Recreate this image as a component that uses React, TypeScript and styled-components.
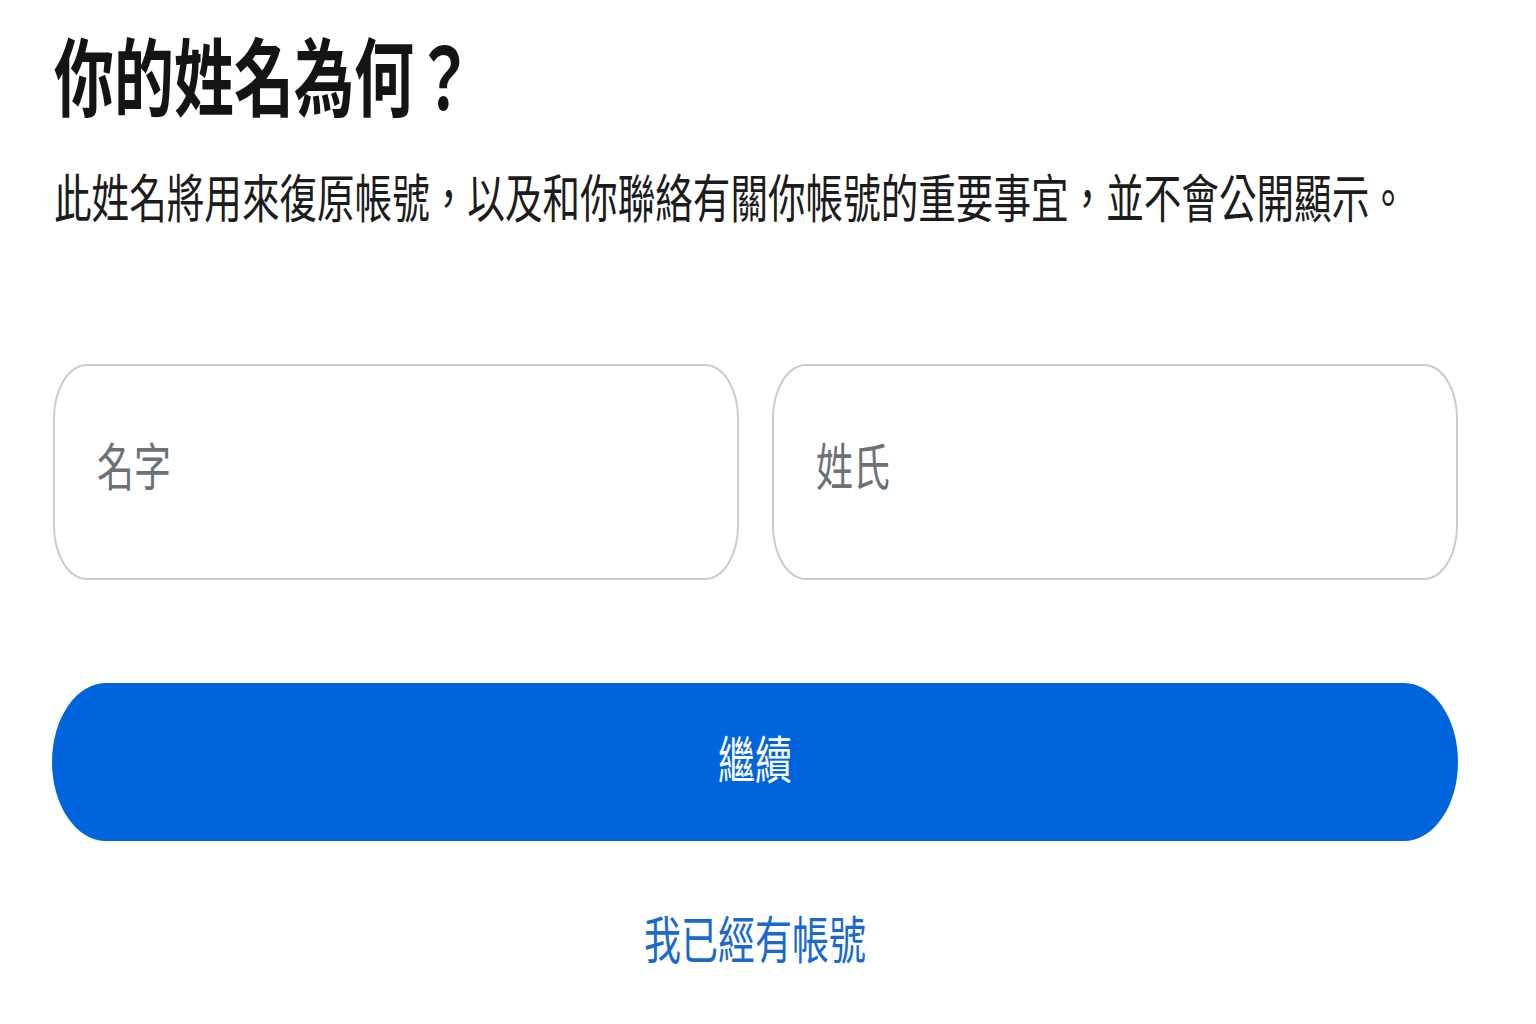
import React, {FC} from 'react';
import styled, {createGlobalStyle} from 'styled-components';

const GlobalStyle = createGlobalStyle`
  html, body {
    margin: 0;
    padding: 0;
    background: #ffffff;
  }
  body {
    font-family: "Noto Sans CJK TC", "Noto Sans", sans-serif;
  }
`;

const Page = styled.div`
  display: flex;
  flex-direction: column;
  width: 1536px;
  min-height: 1024px;
  box-sizing: border-box;
  padding: 36px 78px 0 52px;
`;

// the screenshot is stretched vertically, so glyphs are scaled on Y
const Tall = styled.span<{$scale?: number; $shift?: number}>`
  display: inline-block;
  transform: translateY(${p => p.$shift ?? -4}px) scaleY(${p => p.$scale ?? 1.38});
  transform-origin: center;
  white-space: nowrap;
`;

const Title = styled.h1`
  margin: 0;
  height: 80px;
  line-height: 80px;
  font-size: 60px;
  font-weight: 700;
  color: #141414;
  padding-left: 2px;
`;

const Subtitle = styled.p`
  margin: 57px 0 0;
  height: 50px;
  line-height: 50px;
  font-size: 37.6px;
  font-weight: 400;
  color: #1c1c1c;
  padding-left: 2px;
`;

const FieldRow = styled.div`
  display: grid;
  grid-template-columns: 1fr 1fr;
  gap: 33px;
  margin-top: 141px;
  padding-left: 1px;
`;

const Field = styled.div`
  display: flex;
  align-items: center;
  height: 216px;
  box-sizing: border-box;
  border: 2px solid #c9cbce;
  border-radius: 34px / 54px;
  padding-left: 42px;
  background: #ffffff;
`;

const Placeholder = styled.span`
  font-size: 37px;
  font-weight: 400;
  color: #6b7176;
  line-height: 50px;
`;

const PrimaryButton = styled.button`
  display: flex;
  align-items: center;
  justify-content: center;
  margin-top: 103px;
  height: 158px;
  width: 100%;
  border: none;
  border-radius: 54px / 79px;
  background: #0064dc;
  color: #ffffff;
  font-family: inherit;
  font-size: 37px;
  font-weight: 400;
  cursor: pointer;
`;

const LinkText = styled.a`
  align-self: center;
  margin-top: 75px;
  height: 50px;
  line-height: 50px;
  font-size: 37px;
  color: #1a69cb;
  text-decoration: none;
  cursor: pointer;
`;

const App: FC = () => {
  return (
    <>
      <GlobalStyle />
      <Page>
        <Title><Tall $scale={1.42} $shift={-3}>你的姓名為何？</Tall></Title>
        <Subtitle>
          <Tall $shift={-2}>此姓名將用來復原帳號，以及和你聯絡有關你帳號的重要事宜，並不會公開顯示。</Tall>
        </Subtitle>
        <FieldRow>
          <Field><Placeholder><Tall $shift={-8}>名字</Tall></Placeholder></Field>
          <Field><Placeholder><Tall $shift={-8}>姓氏</Tall></Placeholder></Field>
        </FieldRow>
        <PrimaryButton><Tall $shift={-5}>繼續</Tall></PrimaryButton>
        <LinkText><Tall $shift={-4}>我已經有帳號</Tall></LinkText>
      </Page>
    </>
  );
};

export default App;
